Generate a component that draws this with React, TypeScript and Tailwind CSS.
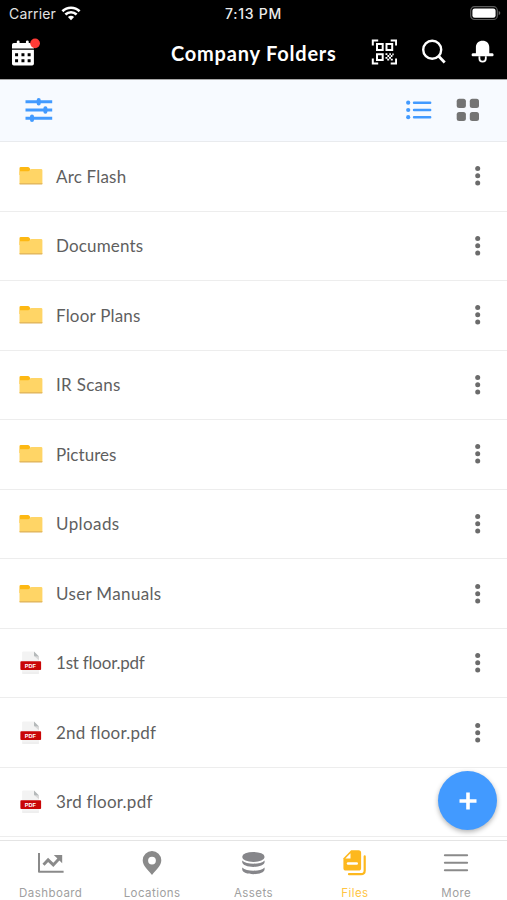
import React from "react";

const rows: { name: string; kind: "folder" | "pdf"; tracking: string }[] = [
  { name: "Arc Flash", kind: "folder", tracking: "tracking-[0.2px]" },
  { name: "Documents", kind: "folder", tracking: "tracking-[0.15px]" },
  { name: "Floor Plans", kind: "folder", tracking: "tracking-[0.2px]" },
  { name: "IR Scans", kind: "folder", tracking: "tracking-[0.3px]" },
  { name: "Pictures", kind: "folder", tracking: "tracking-[0.05px]" },
  { name: "Uploads", kind: "folder", tracking: "tracking-[0.4px]" },
  { name: "User Manuals", kind: "folder", tracking: "tracking-[0.35px]" },
  { name: "1st floor.pdf", kind: "pdf", tracking: "tracking-[-0.22px]" },
  { name: "2nd floor.pdf", kind: "pdf", tracking: "tracking-[0.25px]" },
  { name: "3rd floor.pdf", kind: "pdf", tracking: "tracking-[0.25px]" },
];

function Wifi() {
  return (
    <svg width="20" height="15" viewBox="0 0 20 15" fill="none" stroke="#fff" strokeWidth="2.6">
      <path d="M1.4 5.2a12.3 12.3 0 0 1 17.2 0" />
      <path d="M4.4 8.5a8 8 0 0 1 11.2 0" />
      <path d="M10 14.2 6.9 11.1a4.5 4.5 0 0 1 6.2 0z" fill="#fff" stroke="none" />
    </svg>
  );
}

function Battery() {
  return (
    <svg width="31" height="15" viewBox="0 0 31 15">
      <rect x="0.7" y="0.7" width="26.6" height="12.8" rx="3.8" fill="none" stroke="#5c5c5c" strokeWidth="1.2" />
      <rect x="2.4" y="2.4" width="23.2" height="9.4" rx="2.3" fill="#fff" />
      <path d="M28.7 5v4.2q1.6-.7 1.6-2.1t-1.6-2.1" fill="#666" />
    </svg>
  );
}

function Calendar() {
  return (
    <svg width="30" height="30" viewBox="11 36 30 30">
      <path d="M12 47.4v-3.6q0-1.8 1.8-1.8h3v-1.5q0-1 1.4-1t1.4 1V42h6.4v-1.5q0-1 1.4-1t1.4 1V42h3.2q2 0 2 1.8v3.6z" fill="#fff" />
      <path d="M12 48.8h22v14q0 1.8-1.8 1.8H13.8q-1.8 0-1.8-1.8z" fill="#fff" />
      <path d="M15.1 52.2h3v3h-3zM21.5 52.2h3v3h-3zM27.7 52.2h3v3h-3zM15.1 58.4h3v3h-3zM21.5 58.4h3v3h-3zM27.7 58.4h3v3h-3z" fill="#000" />
      <circle cx="35.2" cy="42.3" r="4.9" fill="#ff3b36" />
    </svg>
  );
}

function QrCode() {
  return (
    <svg width="26" height="26" viewBox="-0.5 0 26 26" fill="none" stroke="#fff" strokeWidth="2">
      <path d="M1.3 6.5V1.4h5.4M19.2 1.4h5.4v5.1M1.3 19.5v5.1h5.4M19.2 24.6h5.4v-5.1" />
      <path d="M5.5 5.1h5.7v5.8H5.5zM15 5.1h5.7v5.8H15zM5.5 15.2h5.7V21H5.5z" />
      <path
        d="M14 14.2h1.9v1.9H14zM17.8 14.2h1.6v1.9h-1.6zM20.8 14.6h1.4v1.6h-1.4zM15.9 16.1h1.9V18h-1.9zM19.2 16.1h1.7V18h-1.7zM14 18h1.9v1.8H14zM17.5 18h2v1.8h-2zM15.7 19.8h2v1.8h-2zM19.3 19.8h2v1.8h-2z"
        fill="#fff"
        stroke="none"
      />
    </svg>
  );
}

function Search() {
  return (
    <svg width="26" height="26" viewBox="0 0 26 26" fill="none" stroke="#fff" strokeWidth="2.4">
      <circle cx="11.2" cy="10.8" r="9" />
      <path d="m17.7 17.3 6 6.2" strokeWidth="2.8" />
    </svg>
  );
}

function Bell() {
  return (
    <svg width="24" height="26" viewBox="0.4 0 24 26">
      <path d="M12 1.8c4 0 6.7 2.7 6.7 6.6v5.8h3.1q1.2 0 1.2 1.5t-1.2 1.6H2.2Q1 17.2 1 15.7t1.2-1.5h3.1V8.4c0-3.9 2.7-6.6 6.7-6.6Z" fill="#fff" />
      <path d="M8.8 17.2v2.2a3.2 3.2 0 0 0 6.4 0v-2.2" fill="none" stroke="#fff" strokeWidth="1.8" />
    </svg>
  );
}

function Sliders() {
  return (
    <svg width="28" height="26" viewBox="0 0 28 26" stroke="#429aff" fill="none" strokeWidth="3">
      <path d="M.5 4.7h26.7M.5 13h26.7M.5 21.2h26.7" />
      <path d="M13.7 3v3.4M20.4 11.3v3.4M7 19.5v3.4" strokeWidth="4" strokeLinecap="round" />
    </svg>
  );
}

function ListIcon() {
  return (
    <svg width="26" height="20" viewBox="0 0 26 20" stroke="#429aff" strokeWidth="2.4" strokeLinecap="round" fill="#429aff">
      <path d="M8 2.7h16.2M8 10h16.2M8 17.2h16.2" />
      <g stroke="none">
        <circle cx="2.2" cy="2.7" r="2.1" />
        <circle cx="2.2" cy="10" r="2.1" />
        <circle cx="2.2" cy="17.2" r="2.1" />
      </g>
    </svg>
  );
}

function GridIcon() {
  return (
    <svg width="24" height="24" viewBox="0 0 24 24" fill="#747474">
      <rect x="0.7" y="0.7" width="9.2" height="9.2" rx="2.5" />
      <rect x="13.8" y="0.7" width="9.2" height="9.2" rx="2.5" />
      <rect x="0.7" y="13.9" width="9.2" height="9.2" rx="2.5" />
      <rect x="13.8" y="13.9" width="9.2" height="9.2" rx="2.5" />
    </svg>
  );
}

function Folder() {
  return (
    <svg width="24" height="20" viewBox="0 0 24 20">
      <path d="M.5 9V2.3Q.5 1 1.8 1h7.1q1 0 1.5.8l.8 1.1V9z" fill="#fdb813" />
      <path d="M.5 6q0-.8.8-.8h7.9q.8 0 1.3-.7l.7-.9q.5-.7 1.3-.7h9.5q1.4 0 1.4 1.3V18H.5z" fill="#ffd566" />
      <path d="M.5 17.2h22.9v.5q0 .9-1 .9h-21q-.9 0-.9-.9z" fill="#deb15a" />
    </svg>
  );
}

function Pdf() {
  return (
    <svg width="24" height="24" viewBox="0 0 24 24">
      <path d="M3.1 1.6q0-1.1 1.1-1.1H15l5 5v15.8q0 1.1-1.1 1.1H4.2q-1.1 0-1.1-1.1z" fill="#f3f3f3" />
      <path d="m15.5 5.5 4.5 3.8V5.5z" fill="#d9d9d9" />
      <path d="M15 .5v3.9q0 1.1 1.1 1.1H20z" fill="#b4b8b9" />
      <rect x="1.4" y="10.2" width="20.7" height="8.7" rx=".9" fill="#c90606" />
      <path d="M3.1 22.2h16.9" stroke="#e4e4e4" strokeWidth=".7" />
      <text x="11.4" y="16.8" textAnchor="middle" fill="#fff" fontFamily="Liberation Sans, sans-serif" fontWeight="bold" fontSize="5.6">PDF</text>
    </svg>
  );
}

function Kebab() {
  return (
    <svg width="8" height="22" viewBox="0 0 8 22" fill="#6b6b6b">
      <circle cx="3.7" cy="3.5" r="2.5" />
      <circle cx="3.7" cy="10.8" r="2.5" />
      <circle cx="3.7" cy="18.1" r="2.5" />
    </svg>
  );
}

function DashboardIcon() {
  return (
    <svg width="28" height="28" viewBox="0 0 28 28" fill="none" stroke="#8a8a8a" strokeWidth="2">
      <path d="M2 4v18.8h24.6" strokeLinejoin="round" />
      <path d="m6.5 15.8 4.6-4.9 5.2 5 6-6.4" strokeWidth="2.9" />
      <path d="M16.8 6.1h8.4v8.1z" fill="#8a8a8a" stroke="none" />
    </svg>
  );
}

function LocationIcon() {
  return (
    <svg width="28" height="28" viewBox="0 0 28 28">
      <path fillRule="evenodd" fill="#8a8a8a" d="M14 2a9.3 9.3 0 0 1 9.3 9.2C23.3 17 18 20.5 14 26 10 20.5 4.7 17 4.7 11.2A9.3 9.3 0 0 1 14 2Zm0 5.7a3.9 3.9 0 1 0 0 7.8 3.9 3.9 0 0 0 0-7.8Z" />
    </svg>
  );
}

function AssetsIcon() {
  return (
    <svg width="28" height="28" viewBox="0 0 28 28" fill="#86868a">
      <ellipse cx="14.4" cy="7.9" rx="11.2" ry="5" />
      <path d="M3.2 11.4c4.5 4.4 17.9 4.4 22.4 0v1.7c0 6.4-22.4 6.4-22.4 0z" />
      <path d="M3.2 18.4c4.5 4.4 17.9 4.4 22.4 0v1.8c0 6.6-22.4 6.6-22.4 0z" />
    </svg>
  );
}

function FilesIcon() {
  return (
    <svg width="28" height="28" viewBox="0 0 28 28">
      <path d="M10.2 1.2h7.4q2.5 0 2.5 2.5V19q0 2.6-2.5 2.6H5q-2.6 0-2.6-2.6V9.2z" fill="#fdb81e" />
      <path d="M9.5 4.2v5.2H4.3z" fill="#fff" />
      <path d="M7 14.5h8.8" stroke="#fff" strokeWidth="2.4" strokeLinecap="round" />
      <path d="M23.7 7.4v14.1q0 3.7-3.7 3.7H8" fill="none" stroke="#fdb81e" strokeWidth="2.2" strokeLinecap="round" />
    </svg>
  );
}

function MoreIcon() {
  return (
    <svg width="28" height="28" viewBox="0 0 28 28" stroke="#8a8a8a" strokeWidth="2.1" strokeLinecap="round">
      <path d="M2.9 6.2h22.2M2.9 13.7h22.2M2.9 21.2h22.2" />
    </svg>
  );
}

const tabs = [
  { label: "Dashboard", Icon: DashboardIcon, color: "text-[#a0a0a0]" },
  { label: "Locations", Icon: LocationIcon, color: "text-[#a0a0a0]" },
  { label: "Assets", Icon: AssetsIcon, color: "text-[#a0a0a0]" },
  { label: "Files", Icon: FilesIcon, color: "text-[#ffc544]" },
  { label: "More", Icon: MoreIcon, color: "text-[#a0a0a0]" },
];

export default function App() {
  return (
    <div className="relative flex h-[900px] w-[507px] flex-col overflow-hidden bg-white font-['Lato',sans-serif]">
      <header className="h-[80px] shrink-0 border-b border-[#a6a6a6] bg-black text-white">
        <div className="grid h-[27px] grid-cols-3 items-center pl-[9px] pr-[6px] font-['Inter',sans-serif] text-[14px]">
          <div className="flex items-center gap-[5px] text-[#e2e2e2]">
            <span className="tracking-[0.15px]">Carrier</span>
            <Wifi />
          </div>
          <span className="-ml-[3px] text-center text-[14px] font-medium tracking-[0.7px] text-[#ececec]">7:13 PM</span>
          <div className="flex justify-end"><Battery /></div>
        </div>
        <div className="flex h-[50px] items-center pl-[11px] pr-[12px]">
          <Calendar />
          <h1 className="ml-[130px] mt-[2px] w-[201px] whitespace-nowrap text-[20px] font-bold tracking-[0.8px]">Company Folders</h1>
          <div className="flex items-center gap-[24px]">
            <QrCode />
            <Search />
            <Bell />
          </div>
        </div>
      </header>

      <div className="flex h-[62px] shrink-0 items-center border-b border-[#e9ebee] bg-[#f7faff] pb-[2px] pl-[25px] pr-[27px]">
        <Sliders />
        <div className="ml-auto flex items-center gap-[24px]">
          <ListIcon />
          <GridIcon />
        </div>
      </div>

      <ul className="h-[698px] shrink-0 overflow-hidden">
        {rows.map(({ name, kind, tracking }) => (
          <li key={name} className="flex h-[69.55px] items-center border-b border-[#ededed] pl-[19px] pr-[25px]">
            {kind === "folder" ? <Folder /> : <Pdf />}
            <span className={`ml-[13px] text-[17px] text-[#5f5f5f] ${tracking}`}>{name}</span>
            <span className="ml-auto"><Kebab /></span>
          </li>
        ))}
      </ul>

      <nav className="grid h-[60px] shrink-0 grid-cols-5 border-t border-[#e4e4e4] bg-white">
        {tabs.map(({ label, Icon, color }) => (
          <div key={label} className={`flex flex-col items-center pt-[8px] ${color}`}>
            <Icon />
            <span className="mt-[8px] font-['Inter',sans-serif] text-[11.5px] leading-[16px] tracking-[0.45px]">{label}</span>
          </div>
        ))}
      </nav>

      <button className="absolute left-[438px] top-[771px] flex size-[59px] items-center justify-center rounded-full bg-[#429aff] shadow-[0_2px_5px_rgba(0,0,0,0.3)]">
        <svg width="18" height="18" viewBox="0 0 18 18" stroke="#fff" strokeWidth="3.6">
          <path d="M9 .5v17M.5 9h17" />
        </svg>
      </button>
    </div>
  );
}
